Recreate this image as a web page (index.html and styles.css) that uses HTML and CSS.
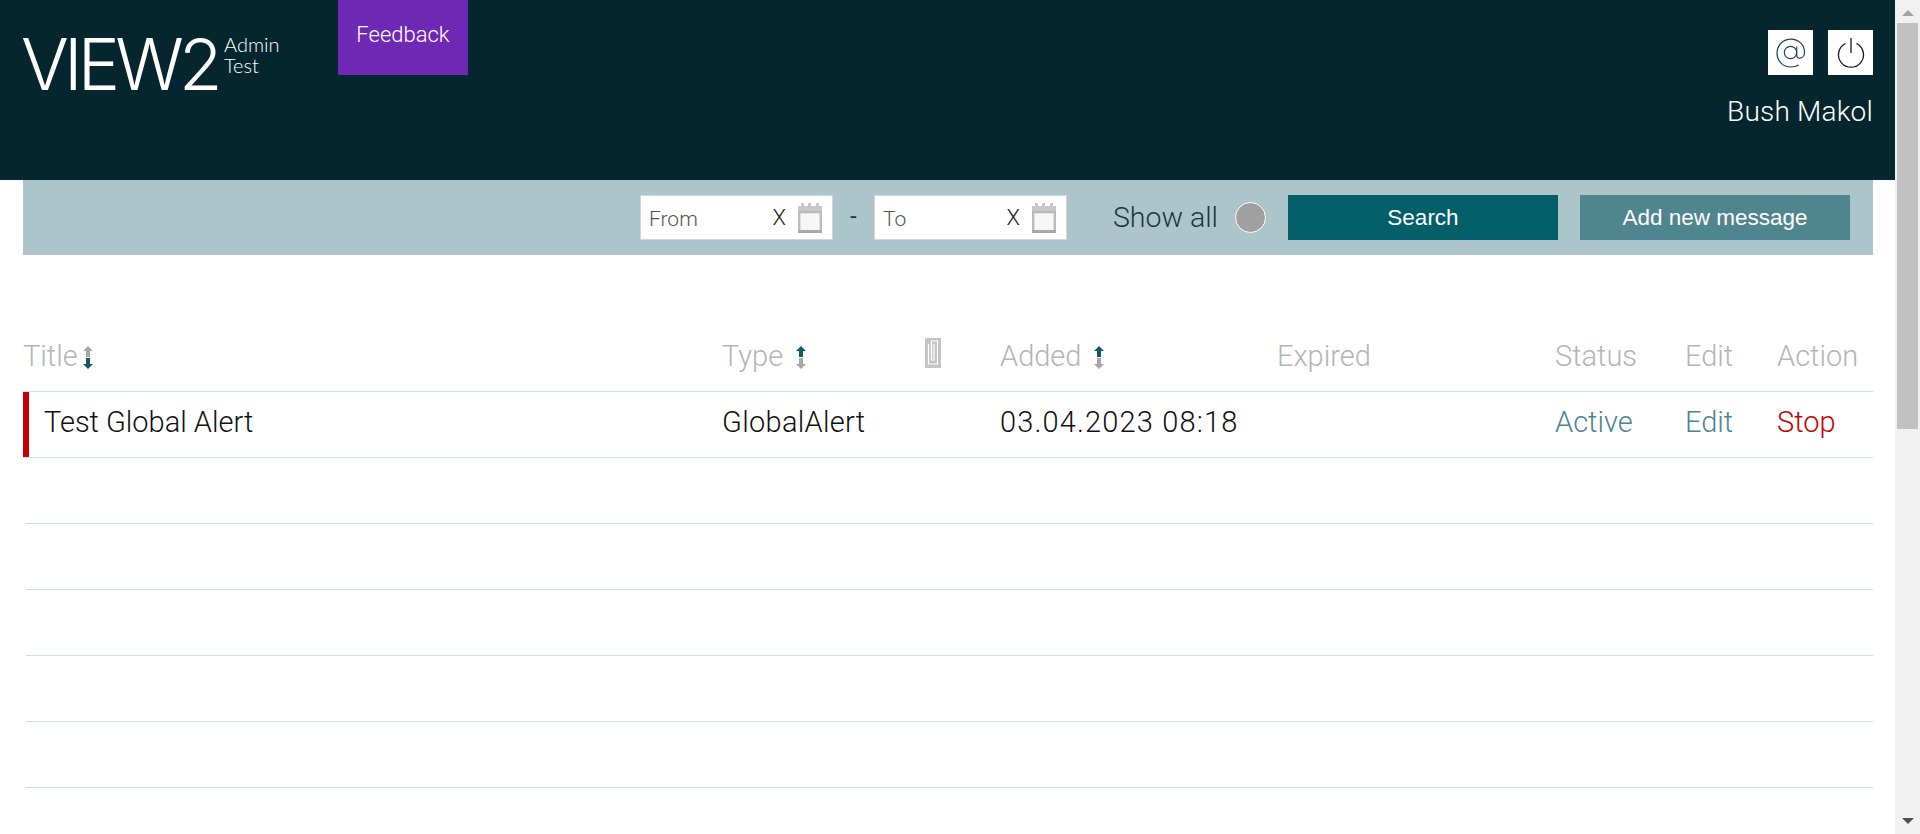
FILE: index.html
```html
<!DOCTYPE html>
<html lang="en">
<head>
    <meta charset="UTF-8">
    <title>VIEW2 Admin</title>
    <link rel="stylesheet" href="styles.css">
</head>
<body>
    <div class="page">
        <header class="topbar">
            <div class="logo">
                <span class="logo-main">VIEW2</span>
                <span class="logo-sub"><span>Admin</span><span>Test</span></span>
            </div>
            <a class="feedback">Feedback</a>
            <div class="user">
                <div class="user-icons">
                    <span class="icon-box">
                        <svg width="30" height="30" viewBox="0 0 30 30" fill="none" stroke="#1c4450" stroke-width="1.2"><circle cx="14.500" cy="14.500" r="6.200"/><path d="M20.700 8.500v8.500c0 2.200 1.400 3.200 3 3.200 2.800 0 4.800-2.600 4.800-6 0-7.400-6-13-13.500-13S1 6.800 1 15s6 14 14 14c3 0 5.500-.7 7.800-2"/></svg>
                    </span>
                    <span class="icon-box">
                        <svg width="30" height="32" viewBox="0 0 30 32" fill="none" stroke="#1a1a1a" stroke-width="1.3"><path d="M15 1v15"/><path d="M9.500 6.500a12.500 12.500 0 1 0 11 0"/></svg>
                    </span>
                </div>
                <div class="user-name">Bush Makol</div>
            </div>
        </header>

        <div class="toolbar">
            <div class="date-box">
                <span class="date-label">From</span>
                <span class="date-clear">X</span>
                <svg class="cal" width="24" height="30" viewBox="0 0 24 30"><path d="M0 3h24v7H0z" fill="#c8c8c8"/><path d="M3 0h3v4H3zM10 0h3v4h-3zM18 0h3v4h-3z" fill="#c8c8c8"/><path d="M1.200 9h21.600v19.500H1.200z" fill="#f6f6f6" stroke="#bbb" stroke-width="2.400"/><path d="M0 27h24v3H0z" fill="#a9a9a9"/></svg>
            </div>
            <span class="date-dash">-</span>
            <div class="date-box">
                <span class="date-label">To</span>
                <span class="date-clear">X</span>
                <svg class="cal" width="24" height="30" viewBox="0 0 24 30"><path d="M0 3h24v7H0z" fill="#c8c8c8"/><path d="M3 0h3v4H3zM10 0h3v4h-3zM18 0h3v4h-3z" fill="#c8c8c8"/><path d="M1.200 9h21.600v19.500H1.200z" fill="#f6f6f6" stroke="#bbb" stroke-width="2.400"/><path d="M0 27h24v3H0z" fill="#a9a9a9"/></svg>
            </div>
            <span class="show-all">Show all</span>
            <span class="radio"></span>
            <button class="btn btn-search">Search</button>
            <button class="btn btn-add">Add new message</button>
        </div>

        <div class="row row-head">
            <div>Title<svg class="sort sort-title" width="10" height="23" viewBox="0 0 10 23"><path d="M5 0l5 5H7v6H3V5H0z" fill="#a8a8a8"/><path d="M5 23l5-5H7v-6H3v6H0z" fill="#0b5c68"/></svg></div>
            <div>Type<svg class="sort" width="10" height="23" viewBox="0 0 10 23"><path d="M5 0l5 5H7v6H3V5H0z" fill="#0b5c68"/><path d="M5 23l5-5H7v-6H3v6H0z" fill="#a8a8a8"/></svg></div>
            <div class="clip-head">
                <svg width="16" height="30" viewBox="0 0 16 30"><path d="M0 0h16v30H0z" fill="#c4c4c4"/><path d="M3.500 6v20h9V3h-6v19h2.500V6" fill="none" stroke="#fff" stroke-width="1.200"/></svg>
            </div>
            <div>Added<svg class="sort" width="10" height="23" viewBox="0 0 10 23"><path d="M5 0l5 5H7v6H3V5H0z" fill="#0b5c68"/><path d="M5 23l5-5H7v-6H3v6H0z" fill="#a8a8a8"/></svg></div>
            <div>Expired</div>
            <div>Status</div>
            <div>Edit</div>
            <div>Action</div>
        </div>

        <div class="row row-alert">
            <div class="cell-title">Test Global Alert</div>
            <div class="cell-type">GlobalAlert</div>
            <div></div>
            <div class="cell-date">03.04.2023 08:18</div>
            <div></div>
            <div class="link">Active</div>
            <div class="link">Edit</div>
            <div class="stop">Stop</div>
        </div>
        <div class="row row-empty"></div>
        <div class="row row-empty"></div>
        <div class="row row-empty"></div>
        <div class="row row-empty"></div>
        <div class="row row-empty"></div>
    </div>

    <div class="scrollbar">
        <span class="arrow-up"></span>
        <span class="thumb"></span>
        <span class="track"></span>
        <span class="arrow-down"></span>
    </div>
</body>
</html>
```

FILE: styles.css
```css
html, body {
    margin: 0;
    height: 834px;
    overflow: hidden;
}
body {
    display: flex;
    font-family: "Roboto", sans-serif;
    font-weight: 300;
    background-color: #fff;
}
.page {
    flex: 1;
    min-width: 0;
}

/* header */
.topbar {
    height: 180px;
    background-color: #05262f;
    display: flex;
    align-items: flex-start;
    padding: 0 22px 0 23px;
    color: #fff;
}
.logo {
    display: flex;
    width: 315px;
    padding-top: 23px;
}
.logo-main {
    font-family: "Inter", sans-serif;
    font-weight: 300;
    font-size: 71px;
    line-height: 82px;
    letter-spacing: -4.8px;
    width: 202px;
    margin-left: -2px;
    margin-right: 1px;
}
.logo-sub {
    display: flex;
    flex-direction: column;
    font-family: "Lato", sans-serif;
    font-weight: 300;
    font-size: 20px;
    line-height: 21px;
    padding-top: 11px;
}
.feedback {
    width: 130px;
    height: 75px;
    background-color: #6f28b4;
    font-size: 22px;
    line-height: 69px;
    text-align: center;
}
.user {
    margin-left: auto;
    padding-top: 30px;
    text-align: right;
}
.user-icons {
    display: flex;
    justify-content: flex-end;
    gap: 15px;
}
.icon-box {
    width: 45px;
    height: 45px;
    background-color: #fff;
    display: flex;
    align-items: center;
    justify-content: center;
}
.user-name {
    font-size: 28px;
    letter-spacing: .2px;
    line-height: 32px;
    margin-top: 21px;
}

/* filter bar */
.toolbar {
    height: 75px;
    margin: 0 22px 0 23px;
    background-color: #acc5ca;
    display: flex;
    align-items: center;
    justify-content: flex-end;
    padding-right: 23px;
    color: #1c3640;
}
.date-box {
    width: 183px;
    height: 43px;
    background-color: #fff;
    border: 1px solid #d5d5d5;
    display: flex;
    align-items: center;
    padding-left: 8px;
}
.date-label {
    flex: 1;
    font-size: 21px;
    color: #555;
    padding-top: 2px;
}
.date-clear {
    font-size: 22px;
    color: #222;
    margin-right: 12px;
}
.cal {
    margin-right: 10px;
}
.date-dash {
    width: 41px;
    text-align: center;
    font-size: 24px;
    font-weight: 400;
    margin-top: -4px;
}
.show-all {
    font-size: 28.500px;
    margin-left: 46px;
}
.radio {
    width: 29px;
    height: 29px;
    border: 1px solid #fff;
    border-radius: 50%;
    background-color: #a0a0a0;
    margin: 0 22px 0 17px;
}
.btn {
    height: 45px;
    border: none;
    color: #fff;
    font-family: "Liberation Sans", sans-serif;
    font-size: 22.500px;
    padding: 1px 0 0;
}
.btn-search {
    width: 270px;
    background-color: #045f68;
}
.btn-add {
    width: 270px;
    margin-left: 22px;
    background-color: #4f858f;
}

/* list */
.row {
    height: 65px;
    margin: 0 22px 0 23px;
    border-bottom: 1px solid #d3dcdf;
    display: grid;
    grid-template-columns: 699px 201px 77px 277px 278px 130px 92px 1fr;
    align-items: center;
    font-size: 29px;
    color: #111;
}
.row-head {
    margin-top: 71px;
    padding-bottom: 6px;
    height: 59px;
    color: #b5b5b5;
}
.sort {
    vertical-align: -3px;
    margin-left: 13px;
}
.sort-title {
    margin-left: 5px;
}
.clip-head {
    display: flex;
    padding-left: 2px;
    margin-top: -5px;
}
.cell-title {
    height: 65px;
    line-height: 61px;
    border-left: 6px solid #c90000;
    padding-left: 15px;
}
.cell-type, .cell-date, .link, .stop {
    margin-top: -6px;
}
.cell-type {
    letter-spacing: .3px;
}
.cell-date {
    letter-spacing: 1.150px;
}
.link {
    color: #4a8594;
}
.stop {
    color: #c90000;
}
.row-empty {
    margin-left: 26px;
}

/* scrollbar */
.scrollbar {
    width: 25px;
    height: 834px;
    background-color: #f1f1f1;
    display: flex;
    flex-direction: column;
    align-items: center;
}
.arrow-up {
    margin: 10px 0 7px;
    border: 6px solid transparent;
    border-top: 0;
    border-bottom: 6px solid #a3a3a3;
}
.thumb {
    width: 21px;
    height: 406px;
    background-color: #c1c1c1;
}
.track {
    flex: 1;
}
.arrow-down {
    margin-bottom: 10px;
    border: 6px solid transparent;
    border-bottom: 0;
    border-top: 6px solid #505050;
}
```
